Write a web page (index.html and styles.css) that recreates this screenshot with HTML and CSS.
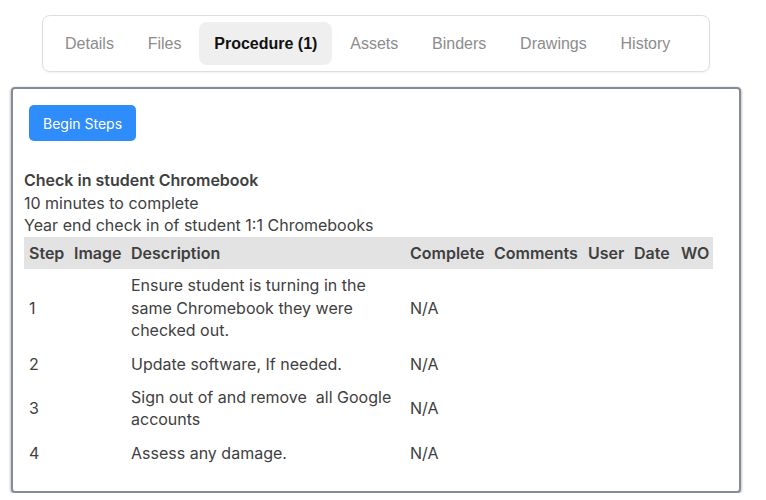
FILE: index.html
```html
<!DOCTYPE html>
<html>
<head>
<meta charset="utf-8">
<link rel="stylesheet" href="styles.css">
</head>
<body>
<div class="page">
  <nav class="tabs">
    <span class="tab">Details</span>
    <span class="tab">Files</span>
    <span class="tab active">Procedure (1)</span>
    <span class="tab">Assets</span>
    <span class="tab">Binders</span>
    <span class="tab">Drawings</span>
    <span class="tab">History</span>
  </nav>
  <section class="card">
    <button class="btn">Begin Steps</button>
    <div class="info">
      <div class="title">Check in student Chromebook</div>
      <div>10 minutes to complete</div>
      <div>Year end check in of student 1:1 Chromebooks</div>
    </div>
    <table class="steps">
      <colgroup>
        <col class="c-step"><col class="c-img"><col class="c-desc"><col class="c-comp"><col class="c-comm"><col class="c-user"><col class="c-date"><col class="c-wo">
      </colgroup>
      <thead>
        <tr><th>Step</th><th>Image</th><th>Description</th><th>Complete</th><th>Comments</th><th>User</th><th>Date</th><th>WO</th></tr>
      </thead>
      <tbody>
        <tr><td>1</td><td></td><td>Ensure student is turning in the same Chromebook they were checked out.</td><td>N/A</td><td></td><td></td><td></td><td></td></tr>
        <tr><td>2</td><td></td><td>Update software, If needed.</td><td>N/A</td><td></td><td></td><td></td><td></td></tr>
        <tr><td>3</td><td></td><td>Sign out of and remove &nbsp;all Google accounts</td><td>N/A</td><td></td><td></td><td></td><td></td></tr>
        <tr><td>4</td><td></td><td>Assess any damage.</td><td>N/A</td><td></td><td></td><td></td><td></td></tr>
      </tbody>
    </table>
  </section>
</div>
</body>
</html>
```
FILE: styles.css
```css
* { box-sizing: border-box; }
html, body { margin: 0; padding: 0; background: #fff; }
.page {
  width: 741px;
  padding: 15px 0 0 11px;
}
.tabs {
  display: flex;
  gap: 1.8px;
  margin: 0 31px 15px 31px;
  padding: 6px 6px;
  border: 1px solid #dedede;
  border-radius: 8px;
  height: 57px;
  align-items: center;
  font-family: "Liberation Sans", Arial, sans-serif;
  font-size: 16px;
  box-shadow: 0 1px 2px rgba(0,0,0,0.06);
}
.tab {
  display: flex;
  align-items: center;
  height: 43px;
  padding: 0 16px;
  color: #8c8c8c;
  border-radius: 8px;
}
.tab.active {
  background: #efefef;
  color: #111;
  font-weight: bold;
  padding: 0 15px;
}
.card {
  border: 2px solid #868c93;
  border-radius: 4px;
  box-shadow: 0 1px 3px rgba(0,0,0,0.45);
  padding: 16px 11px 22px 11px;
  height: 406px;
  font-family: Inter, "Noto Sans", sans-serif;
  color: #404040;
  font-size: 16px;
}
.btn {
  margin-left: 5px;
  background: #2f8cfb;
  color: #fff;
  border: 0;
  border-radius: 5px;
  font-family: Inter, sans-serif;
  font-size: 14px;
  height: 36px;
  padding: 0 14px;
}
.info {
  margin-top: 28px;
  line-height: 22.5px;
}
.title { font-weight: 600; }
.steps {
  border-collapse: collapse;
  table-layout: fixed;
  width: 689px;
  line-height: 22.5px;
}
.c-step { width: 45px; }
.c-img { width: 57px; }
.c-desc { width: 279px; }
.c-comp { width: 84px; }
.c-comm { width: 94px; }
.c-user { width: 46px; }
.c-date { width: 47px; }
.c-wo { width: 37px; }
.steps th {
  background: #e3e3e3;
  text-align: left;
  font-weight: 600;
  padding: 5px 5px;
  white-space: nowrap;
}
.steps td {
  padding: 5.4px 5px;
  vertical-align: middle;
}
```
